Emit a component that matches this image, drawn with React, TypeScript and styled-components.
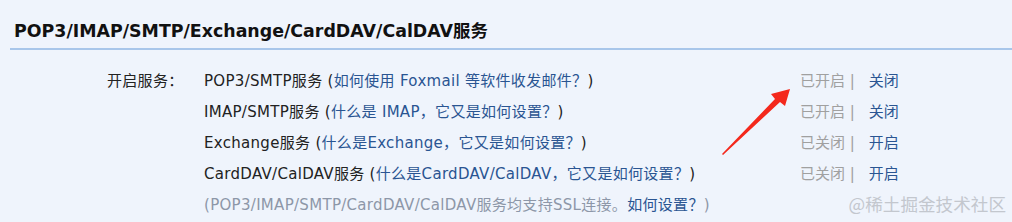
import styled, { createGlobalStyle } from "styled-components";

const GlobalStyle = createGlobalStyle`
  html, body {
    margin: 0;
    padding: 0;
    background: #eff4fc;
  }
  body {
    font-family: "DejaVu Sans", "Noto Sans CJK SC", sans-serif;
    color: #222;
  }
`;

const Page = styled.div`
  position: relative;
  width: 1012px;
  height: 222px;
  overflow: hidden;
  background: #eff4fc;
`;

const Header = styled.div`
  margin-left: 10px;
  padding: 21px 4px 7px;
  line-height: 20px;
  font-size: 17.4px;
  font-weight: bold;
  color: #111;
  border-bottom: 2px solid #a8c6ea;
`;

const Body = styled.div`
  display: grid;
  grid-template-columns: 97px 596px auto;
  padding: 16px 0 0 107px;
  font-size: 15px;
  line-height: 31px;
  letter-spacing: 0.3px;
`;

const Label = styled.div`
  grid-column: 1;
  grid-row: 1;
  color: #222;
`;

const Service = styled.div`
  grid-column: 2;
  white-space: nowrap;
  color: #222;
`;

const Hint = styled.span<{ $muted?: boolean }>`
  color: ${(p) => (p.$muted ? "#8d97a8" : "#2a5592")};
`;

const Paren = styled.span`
  color: #222;
`;

const Status = styled.div`
  grid-column: 3;
  display: flex;
  gap: 14px;
  white-space: nowrap;
  letter-spacing: 0;
`;

const State = styled.span`
  color: #a0a0a0;
`;

const Action = styled.a`
  color: #2a5592;
  text-decoration: none;
`;

const Arrow = styled.svg`
  position: absolute;
  left: 700px;
  top: 80px;
`;

const Watermark = styled.div`
  position: absolute;
  right: 6px;
  bottom: 7px;
  font-size: 17.6px;
  line-height: 22px;
  color: #c3c7ce;
  font-family: "Noto Sans CJK SC", sans-serif;
`;

const rows = [
  { name: "POP3/SMTP服务", hint: "如何使用 Foxmail 等软件收发邮件？", on: true },
  { name: "IMAP/SMTP服务", hint: "什么是 IMAP，它又是如何设置？", on: true },
  { name: "Exchange服务", hint: "什么是Exchange，它又是如何设置？", on: false },
  { name: "CardDAV/CalDAV服务", hint: "什么是CardDAV/CalDAV，它又是如何设置？", on: false },
];

export default function App() {
  return (
    <Page>
      <GlobalStyle />
      <Header>POP3/IMAP/SMTP/Exchange/CardDAV/CalDAV服务</Header>
      <Body>
        <Label>开启服务：</Label>
        {rows.map((r) => (
          <>
            <Service key={r.name + "s"}>
              {r.name} <Paren>(</Paren>
              <Hint>{r.hint}</Hint>
              <Paren>)</Paren>
            </Service>
            <Status key={r.name + "t"}>
              <State>{r.on ? "已开启" : "已关闭"} |</State>
              <Action>{r.on ? "关闭" : "开启"}</Action>
            </Status>
          </>
        ))}
        <Service>
          <Hint $muted>(POP3/IMAP/SMTP/CardDAV/CalDAV服务均支持SSL连接。</Hint>
          <Hint>如何设置？</Hint>
          <Hint $muted>)</Hint>
        </Service>
      </Body>
      <Arrow width="100" height="80" viewBox="0 0 100 80">
        <path d="M22 74 L75 19 L71 14 L90 9 L85 26 L80 22 L23 75 Z" fill="#f4281c" />
      </Arrow>
      <Watermark>@稀土掘金技术社区</Watermark>
    </Page>
  );
}
